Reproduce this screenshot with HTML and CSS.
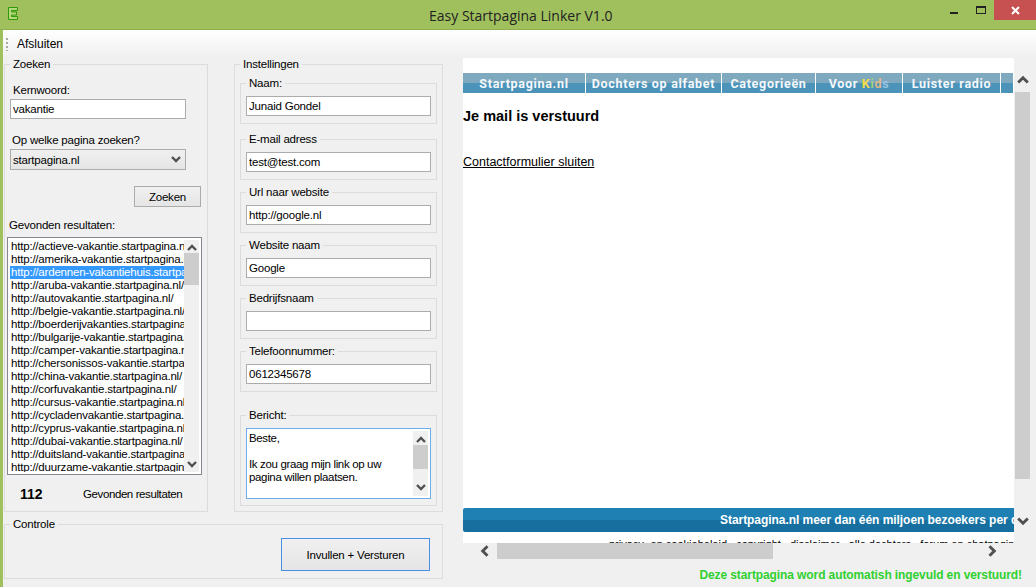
FILE: index.html
```html
<!DOCTYPE html>
<html lang="en">
<head>
    <meta charset="UTF-8">
    <title>Easy Startpagina Linker V1.0</title>
    <link rel="stylesheet" href="styles.css">
</head>
<body>
    <svg class="icon_defs">
        <symbol id="chev_up" viewBox="0 0 10 7"><path d="M1 6 L5 2 L9 6" fill="none" stroke="#505050" stroke-width="2.4"/></symbol>
        <symbol id="chev_down" viewBox="0 0 10 7"><path d="M1 1 L5 5 L9 1" fill="none" stroke="#505050" stroke-width="2.4"/></symbol>
        <symbol id="chev_left" viewBox="0 0 7 10"><path d="M6 1 L2 5 L6 9" fill="none" stroke="#505050" stroke-width="2.4"/></symbol>
        <symbol id="chev_right" viewBox="0 0 7 10"><path d="M1 1 L5 5 L1 9" fill="none" stroke="#505050" stroke-width="2.4"/></symbol>
    </svg>

    <header class="titlebar">
        <svg class="app_icon" width="10" height="13" viewBox="0 0 10 13">
            <path d="M0.5 0.5 H9.5 V3.5 H3.5 V5 H8.5 V8 H3.5 V9.5 H9.5 V12.5 H0.5 Z" fill="#b7d77f" stroke="#2f9a06"/>
        </svg>
        <span class="title">Easy Startpagina Linker V1.0</span>
        <div class="win_buttons">
            <span class="win_min"></span>
            <span class="win_max"></span>
            <span class="win_close">
                <svg width="9" height="9" viewBox="0 0 9 9"><path d="M1 1 L8 8 M8 1 L1 8" stroke="#fff" stroke-width="2"/></svg>
            </span>
        </div>
    </header>

    <div class="client">
        <nav class="menubar">
            <span class="grip"></span>
            <span>Afsluiten</span>
        </nav>

        <div class="workspace">
            <div class="forms">
                <div class="panels">
                    <fieldset class="group search_group">
                        <legend>Zoeken</legend>
                        <label class="kw_label">Kernwoord:</label>
                        <input class="field kw_input" type="text" value="vakantie">
                        <label class="page_label">Op welke pagina zoeken?</label>
                        <div class="combo">
                            <span>startpagina.nl</span>
                            <svg width="10" height="7"><use href="#chev_down"/></svg>
                        </div>
                        <button class="btn search_btn" type="button">Zoeken</button>
                        <label class="found_label">Gevonden resultaten:</label>
                        <div class="listbox">
                            <ul class="results">
                                <li>http://actieve-vakantie.startpagina.nl/</li>
                                <li>http://amerika-vakantie.startpagina.nl/</li>
                                <li class="selected">http://ardennen-vakantiehuis.startpagina.nl/</li>
                                <li>http://aruba-vakantie.startpagina.nl/</li>
                                <li>http://autovakantie.startpagina.nl/</li>
                                <li>http://belgie-vakantie.startpagina.nl/</li>
                                <li>http://boerderijvakanties.startpagina.nl/</li>
                                <li>http://bulgarije-vakantie.startpagina.nl/</li>
                                <li>http://camper-vakantie.startpagina.nl/</li>
                                <li>http://chersonissos-vakantie.startpagina.nl/</li>
                                <li>http://china-vakantie.startpagina.nl/</li>
                                <li>http://corfuvakantie.startpagina.nl/</li>
                                <li>http://cursus-vakantie.startpagina.nl/</li>
                                <li>http://cycladenvakantie.startpagina.nl/</li>
                                <li>http://cyprus-vakantie.startpagina.nl/</li>
                                <li>http://dubai-vakantie.startpagina.nl/</li>
                                <li>http://duitsland-vakantie.startpagina.nl/</li>
                                <li>http://duurzame-vakantie.startpagina.nl/</li>
                            </ul>
                            <div class="vscroll list_scroll">
                                <svg width="10" height="7"><use href="#chev_up"/></svg>
                                <span class="list_thumb"></span>
                                <svg class="push_end" width="10" height="7"><use href="#chev_down"/></svg>
                            </div>
                        </div>
                        <div class="count_row">
                            <strong class="count">112</strong>
                            <span class="count_label">Gevonden resultaten</span>
                        </div>
                    </fieldset>

                    <fieldset class="group settings_group">
                        <legend>Instellingen</legend>
                        <fieldset class="group sub_group">
                            <legend>Naam:</legend>
                            <input class="field" type="text" value="Junaid Gondel">
                        </fieldset>
                        <fieldset class="group sub_group wide_gap">
                            <legend>E-mail adress</legend>
                            <input class="field" type="text" value="test@test.com">
                        </fieldset>
                        <fieldset class="group sub_group">
                            <legend>Url naar website</legend>
                            <input class="field" type="text" value="http://google.nl">
                        </fieldset>
                        <fieldset class="group sub_group">
                            <legend>Website naam</legend>
                            <input class="field" type="text" value="Google">
                        </fieldset>
                        <fieldset class="group sub_group">
                            <legend>Bedrijfsnaam</legend>
                            <input class="field" type="text" value="">
                        </fieldset>
                        <fieldset class="group sub_group">
                            <legend>Telefoonnummer:</legend>
                            <input class="field" type="text" value="0612345678">
                        </fieldset>
                        <fieldset class="group sub_group message_group">
                            <legend>Bericht:</legend>
                            <div class="memo">
                                <textarea class="memo_text" rows="5">Beste,

Ik zou graag mijn link op uw
pagina willen plaatsen.</textarea>
                                <div class="vscroll memo_scroll">
                                    <svg width="10" height="7"><use href="#chev_up"/></svg>
                                    <span class="memo_thumb"></span>
                                    <svg class="push_end" width="10" height="7"><use href="#chev_down"/></svg>
                                </div>
                            </div>
                        </fieldset>
                    </fieldset>
                </div>

                <fieldset class="group control_group">
                    <legend>Controle</legend>
                    <button class="btn send_btn" type="button">Invullen + Versturen</button>
                </fieldset>
            </div>

            <div class="viewer">
                <div class="viewer_top">
                    <div class="page">
                        <div class="site_nav">
                            <a>Startpagina.nl</a>
                            <a>Dochters op alfabet</a>
                            <a>Categorieën</a>
                            <a>Voor <span class="kid_k">K</span><span class="kid_i">i</span><span class="kid_d">d</span><span class="kid_s">s</span></a>
                            <a>Luister radio</a>
                            <a></a>
                        </div>
                        <h1 class="sent_title">Je mail is verstuurd</h1>
                        <a class="close_link">Contactformulier sluiten</a>
                        <div class="site_footer">Startpagina.nl meer dan één miljoen bezoekers per dag</div>
                        <div class="site_legal">privacy- en cookiebeleid &nbsp; copyright &nbsp; disclaimer &nbsp; alle dochters &nbsp; forum en chatpagina</div>
                    </div>
                    <div class="vscroll page_scroll">
                        <svg width="12" height="9"><use href="#chev_up"/></svg>
                        <span class="page_thumb"></span>
                        <svg width="12" height="9"><use href="#chev_down"/></svg>
                    </div>
                </div>
                <div class="hscroll">
                    <svg width="9" height="12"><use href="#chev_left"/></svg>
                    <span class="h_thumb"></span>
                    <svg width="9" height="12"><use href="#chev_right"/></svg>
                </div>
                <p class="note">Deze startpagina word automatish ingevuld en verstuurd!</p>
            </div>
        </div>
    </div>
</body>
</html>
```

FILE: styles.css
```css
/*tag*/
*{
    box-sizing: border-box;
}
html, body{
    margin: 0;
    height: 587px;
    overflow: hidden;
}
body{
    background: #f0f0f0;
    color: #000;
    font-family: "Liberation Sans", Arial, sans-serif;
    font-size: 11.5px;
    letter-spacing: -0.2px;
}
label{
    display: block;
    line-height: 14px;
}
p{
    margin: 0;
}


/*window chrome*/
.icon_defs{
    display: none;
}
.titlebar{
    display: flex;
    align-items: flex-start;
    height: 30px;
    background: #a0c05e;
    border-bottom: 1px solid #8fae50;
}
.app_icon{
    margin: 7px 0 0 8px;
}
.title{
    flex: 1;
    padding: 7px 0 0 411px;
    font-family: "Open Sans", sans-serif;
    font-size: 14px;
    letter-spacing: 0;
    line-height: 18px;
    color: #222;
}
.win_buttons{
    display: flex;
    align-items: flex-start;
}
.win_min{
    width: 8px;
    height: 2px;
    margin: 12px 18px 0 0;
    background: #222;
}
.win_max{
    width: 10px;
    height: 8px;
    margin: 6px 8px 0 0;
    border: 1px solid #222;
    border-top-width: 2px;
}
.win_close{
    display: flex;
    align-items: center;
    justify-content: center;
    width: 42px;
    height: 20px;
    background: #c75050;
}
.client{
    height: 557px;
    border-left: 3px solid #a0c05e;
}
.menubar{
    display: flex;
    align-items: center;
    gap: 9px;
    height: 27px;
    padding: 1px 0 0 3px;
    background: linear-gradient(#fff, #f0f0f0);
    font-size: 12px;
    letter-spacing: 0;
}
.grip{
    width: 2px;
    height: 13px;
    background: repeating-linear-gradient(#a8a8a8 0 2px, transparent 2px 4px);
}


/*layout*/
.workspace{
    display: flex;
    padding-left: 1px;
}
.forms{
    width: 439px;
}
.panels{
    display: flex;
    gap: 26px;
}
.viewer{
    width: 573px;
    margin: 1px 0 0 20px;
}
.viewer_top{
    display: flex;
}


/*group boxes*/
.group{
    margin: 0;
    min-width: 0;
    border: 1px solid #dcdcdc;
}
.group legend{
    margin-left: 5px;
    padding: 0 3px;
    line-height: 14px;
}
.search_group{
    display: flex;
    flex-direction: column;
    align-items: flex-start;
    width: 204px;
    padding: 0 4px 9px 2px;
}
.search_group > legend{
    margin-left: 3px;
}
.settings_group{
    display: flex;
    flex-direction: column;
    gap: 5px;
    width: 209px;
    padding: 5px;
}
.settings_group > legend{
    margin-left: 0;
}
.sub_group{
    padding: 6px 4px 7px 5px;
}
.sub_group > legend{
    margin-left: 0;
}
.sub_group.wide_gap{
    margin-top: 3px;
}
.message_group{
    margin-top: 11px;
    padding-bottom: 6px;
}
.control_group{
    display: flex;
    justify-content: flex-end;
    height: 62px;
    margin-top: 5px;
    padding: 0 12px 0 0;
}


/*inputs*/
.field{
    display: block;
    width: 185px;
    height: 20px;
    padding: 0 2px;
    border: 1px solid #acacac;
    border-radius: 0;
    outline: none;
    background: #fff;
    font: 11.5px "Liberation Sans", Arial, sans-serif;
    letter-spacing: -0.2px;
    color: #000;
}
.kw_label{
    margin: 12px 0 0 6px;
}
.kw_input{
    width: 176px;
    margin: 2px 0 0 3px;
}
.page_label{
    margin: 14px 0 0 5px;
}
.combo{
    display: flex;
    align-items: center;
    justify-content: space-between;
    width: 176px;
    height: 21px;
    margin: 2px 0 0 3px;
    padding: 0 4px 0 2px;
    border: 1px solid #acacac;
    background: linear-gradient(#f0f0f0, #e5e5e5);
}
.btn{
    border: 1px solid #acacac;
    background: linear-gradient(#f0f0f0, #e5e5e5);
    font: 11.5px "Liberation Sans", Arial, sans-serif;
    letter-spacing: -0.2px;
    color: #000;
}
.search_btn{
    width: 67px;
    height: 21px;
    margin: 16px 0 0 127px;
}
.send_btn{
    width: 149px;
    height: 33px;
    margin-top: 7px;
    border-color: #4a90e2;
}
.found_label{
    margin: 11px 0 0 2px;
}


/*list of results*/
.listbox{
    display: flex;
    width: 195px;
    height: 238px;
    margin-top: 5px;
    padding: 2px;
    border: 1px solid #828790;
    background: #fff;
}
.results{
    width: 175px;
    margin: 0;
    padding: 0;
    overflow: hidden;
    list-style: none;
}
.results li{
    height: 13px;
    padding-left: 1px;
    line-height: 13px;
    white-space: nowrap;
}
.results .selected{
    background: #3399ff;
    color: #fff;
}
.count_row{
    display: flex;
    align-items: center;
    height: 14px;
    margin-top: 12px;
}
.count{
    width: 76px;
    padding-left: 13px;
    font-size: 14px;
    letter-spacing: 0;
}
.count_label{
    letter-spacing: -0.4px;
}


/*scroll bars*/
.vscroll{
    display: flex;
    flex-direction: column;
    align-items: center;
}
.push_end{
    margin-top: auto;
}
.list_scroll{
    width: 15px;
    padding: 4px 0;
    background: #f0f0f0;
}
.list_thumb{
    width: 15px;
    height: 32px;
    margin-top: 2px;
    background: #cdcdcd;
}
.memo_scroll{
    width: 15px;
    padding: 5px 0;
    background: #f0f0f0;
}
.memo_thumb{
    width: 15px;
    height: 24px;
    margin-top: 2px;
    background: #cdcdcd;
}
.page_scroll{
    width: 16px;
    padding: 17px 0 0 1px;
}
.page_thumb{
    width: 15px;
    height: 387px;
    margin: 8px 0 38px;
    background: #cdcdcd;
}
.hscroll{
    display: flex;
    align-items: center;
    height: 16px;
    padding-left: 17px;
}
.h_thumb{
    width: 276px;
    height: 16px;
    margin: 0 215px 0 8px;
    background: #cdcdcd;
}


/*message box*/
.memo{
    display: flex;
    width: 185px;
    height: 71px;
    padding: 2px;
    border: 1px solid #6aaeee;
    background: #fff;
}
.memo_text{
    flex: 1;
    min-width: 0;
    padding: 1px 0 0;
    border: none;
    outline: none;
    overflow: hidden;
    resize: none;
    font: 11.5px/13px "Liberation Sans", Arial, sans-serif;
    letter-spacing: -0.35px;
    color: #000;
}


/*page inside the browser control*/
.page{
    display: flex;
    flex-direction: column;
    width: 551px;
    height: 485px;
    padding-top: 15px;
    overflow: hidden;
    background: #fff;
}
.site_nav{
    display: grid;
    flex: none;
    grid-template-columns: 123px 136px 94px 87px 98px 1fr;
    height: 20px;
    background: linear-gradient(#7fa9be 0 10px, #4b93b8 10px);
}
.site_nav a{
    border-right: 1px solid #fff;
    font-family: Roboto, sans-serif;
    font-size: 12.5px;
    font-weight: 700;
    letter-spacing: 0.7px;
    line-height: 21px;
    text-align: center;
    white-space: nowrap;
    color: #f4f8fb;
}
.kid_k{
    color: #f5dc4a;
}
.kid_i{
    color: #a6d27a;
}
.kid_d{
    color: #e0b98a;
}
.kid_s{
    color: #9cc6e2;
}
.sent_title{
    flex: none;
    margin: 15px 0 0;
    font-size: 14.5px;
    letter-spacing: 0;
    line-height: 16px;
}
.close_link{
    flex: none;
    margin-top: 31px;
    font-size: 12.5px;
    letter-spacing: 0;
    line-height: 14px;
    text-decoration: underline;
}
.site_footer{
    flex: none;
    height: 24px;
    margin-top: auto;
    padding-left: 257px;
    border-radius: 2px 0 0 2px;
    background: linear-gradient(#1f80b3 0 12px, #166f9e 12px);
    font-size: 12px;
    font-weight: 700;
    letter-spacing: -0.05px;
    line-height: 24px;
    white-space: nowrap;
    color: #fff;
}
.site_legal{
    flex: none;
    height: 11px;
    padding: 6px 0 0 146px;
    font-size: 11px;
    letter-spacing: 0;
    line-height: 12px;
    white-space: nowrap;
}
.note{
    margin: 9px 14px 0 0;
    font-size: 12px;
    font-weight: 700;
    letter-spacing: -0.1px;
    line-height: 14px;
    text-align: right;
    color: #2fd02f;
}
```
